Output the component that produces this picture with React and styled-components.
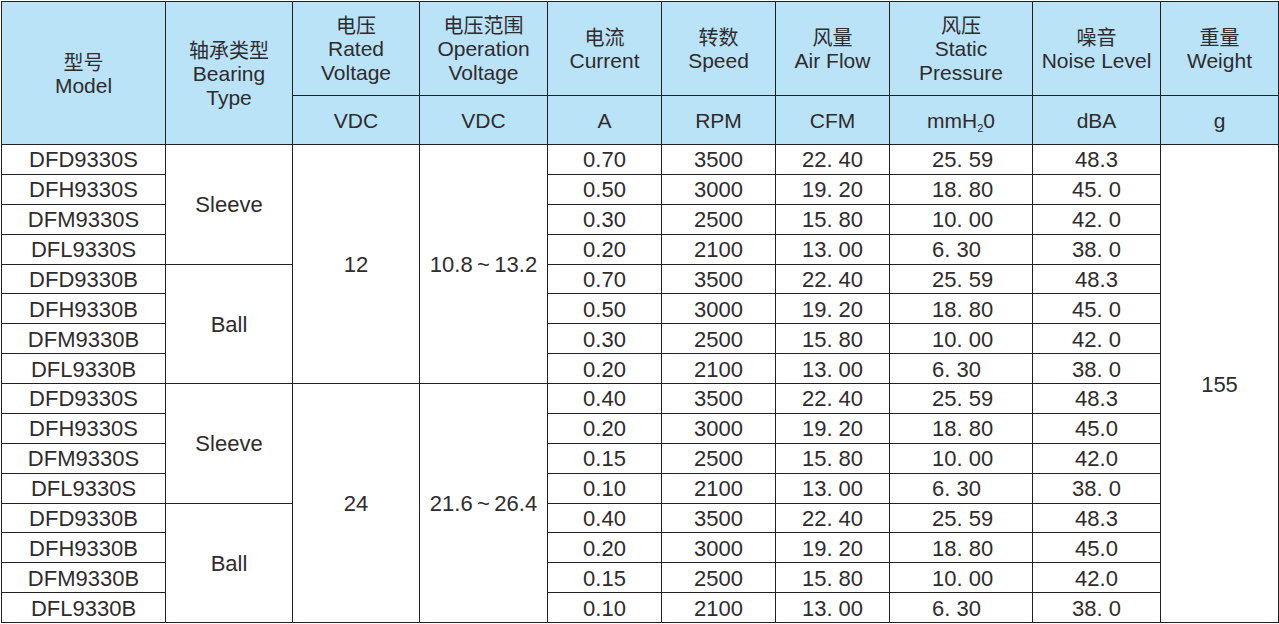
import React from "react";
import styled, { createGlobalStyle } from "styled-components";

const Global = createGlobalStyle`
  html, body { margin: 0; padding: 0; background: #ffffff; }
  body { font-family: "Liberation Sans", Arial, "Noto Sans CJK SC", sans-serif; color: #231f20; }
`;

const Wrap = styled.div`
  padding: 1px 0 0 1px;
`;

const Table = styled.table`
  border-collapse: collapse;
  table-layout: fixed;
  width: 1278px;
  font-size: 21px;
`;

const HeadCell = styled.th`
  background: #bae3f8;
  border: 1px solid #231f20;
  font-weight: 400;
  line-height: 24px;
  padding: 1px 0 0;
  text-align: center;
  vertical-align: middle;
  color: #302b2c;
`;

const Zh = styled.span`
  display: block;
  font-family: "Noto Sans CJK SC", sans-serif;
  font-size: 20px;
`;

const Sub = styled.sub`
  font-size: 11px;
  vertical-align: -4px;
  line-height: 0;
`;

const HeadRow = styled.tr`
  height: ${(p) => p.$h}px;
`;

const DataRow = styled.tr`
  height: 29.875px;
`;

const Cell = styled.td`
  border: 1px solid #231f20;
  padding: ${(p) => (p.$left ? "2px 0 0 42px" : "2px 0 0")};
  text-align: ${(p) => (p.$left ? "left" : "center")};
  vertical-align: middle;
  font-size: 22px;
  line-height: 24px;
  white-space: pre;
  color: #302b2c;
`;

const widths = [164, 127, 127, 128, 114, 114, 114, 143, 128, 118];

const groups = [
  { v: "12", range: "10.8\u2009~\u200913.2", currents: ["0.70", "0.50", "0.30", "0.20"], noise: ["48.3", "45. 0", "42. 0", "38. 0"] },
  { v: "24", range: "21.6\u2009~\u200926.4", currents: ["0.40", "0.20", "0.15", "0.10"], noise: ["48.3", "45.0", "42.0", "38. 0"] },
];
const bearings = [
  { name: "Sleeve", suffix: "S" },
  { name: "Ball", suffix: "B" },
];
const prefixes = ["DFD", "DFH", "DFM", "DFL"];
const speeds = ["3500", "3000", "2500", "2100"];
const flows = ["22. 40", "19. 20", "15. 80", "13. 00"];
const pressures = ["25. 59", "18. 80", "10. 00", "6. 30"];

function buildRows() {
  const rows = [];
  groups.forEach((g, gi) => {
    bearings.forEach((b, bi) => {
      prefixes.forEach((p, i) => {
        const first = i === 0;
        rows.push(
          <DataRow key={`${gi}-${bi}-${i}`}>
            <Cell>{`${p}9330${b.suffix}`}</Cell>
            {first && <Cell rowSpan={4}>{b.name}</Cell>}
            {first && bi === 0 && <Cell rowSpan={8}>{g.v}</Cell>}
            {first && bi === 0 && <Cell rowSpan={8}>{g.range}</Cell>}
            <Cell>{g.currents[i]}</Cell>
            <Cell>{speeds[i]}</Cell>
            <Cell>{flows[i]}</Cell>
            <Cell $left>{pressures[i]}</Cell>
            <Cell>{g.noise[i]}</Cell>
            {gi === 0 && bi === 0 && first && <Cell rowSpan={16}>155</Cell>}
          </DataRow>
        );
      });
    });
  });
  return rows;
}

export default function App() {
  return (
    <Wrap>
      <Global />
      <Table>
        <colgroup>
          {widths.map((w, i) => (
            <col key={i} style={{ width: w }} />
          ))}
        </colgroup>
        <thead>
          <HeadRow $h={94}>
            <HeadCell rowSpan={2}>
              <Zh>型号</Zh>Model
            </HeadCell>
            <HeadCell rowSpan={2}>
              <Zh>轴承类型</Zh>Bearing<br />Type
            </HeadCell>
            <HeadCell>
              <Zh>电压</Zh>Rated<br />Voltage
            </HeadCell>
            <HeadCell>
              <Zh>电压范围</Zh>Operation<br />Voltage
            </HeadCell>
            <HeadCell>
              <Zh>电流</Zh>Current
            </HeadCell>
            <HeadCell>
              <Zh>转数</Zh>Speed
            </HeadCell>
            <HeadCell>
              <Zh>风量</Zh>Air Flow
            </HeadCell>
            <HeadCell>
              <Zh>风压</Zh>Static<br />Pressure
            </HeadCell>
            <HeadCell>
              <Zh>噪音</Zh>Noise Level
            </HeadCell>
            <HeadCell>
              <Zh>重量</Zh>Weight
            </HeadCell>
          </HeadRow>
          <HeadRow $h={49}>
            <HeadCell>VDC</HeadCell>
            <HeadCell>VDC</HeadCell>
            <HeadCell>A</HeadCell>
            <HeadCell>RPM</HeadCell>
            <HeadCell>CFM</HeadCell>
            <HeadCell>
              mmH<Sub>2</Sub>0
            </HeadCell>
            <HeadCell>dBA</HeadCell>
            <HeadCell>g</HeadCell>
          </HeadRow>
        </thead>
        <tbody>{buildRows()}</tbody>
      </Table>
    </Wrap>
  );
}
